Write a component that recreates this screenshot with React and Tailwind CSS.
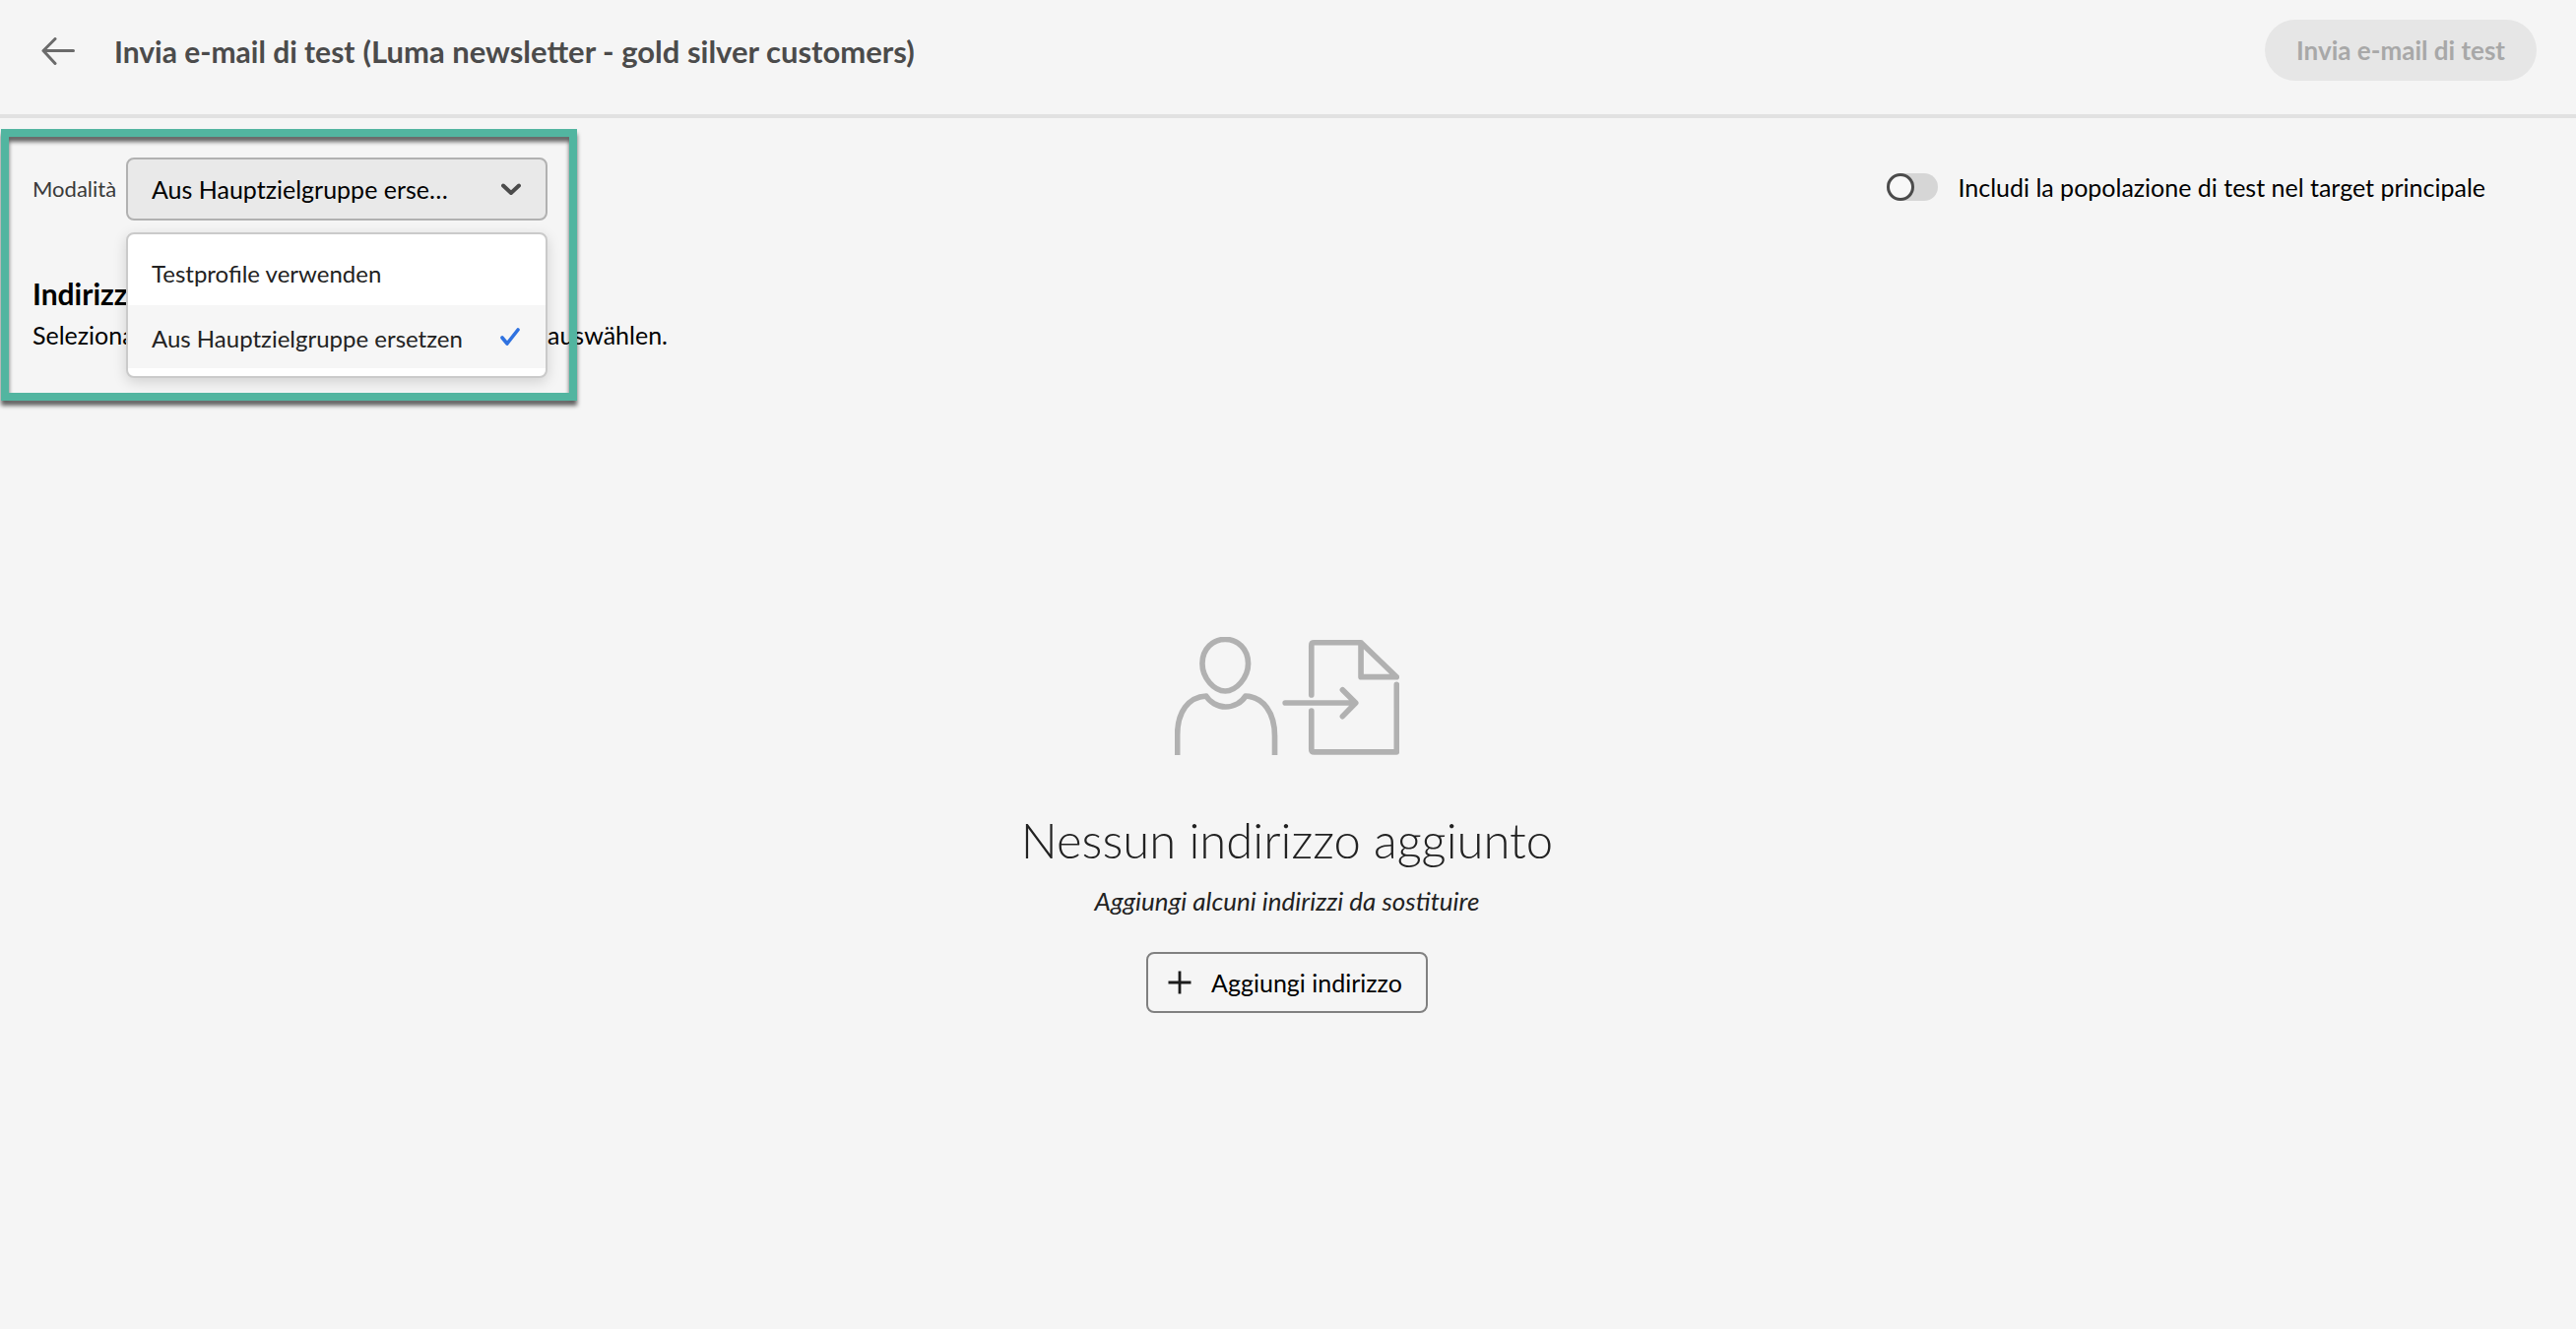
import { useState } from "react";

const MODES = ["Testprofile verwenden", "Aus Hauptzielgruppe ersetzen"];

function ArrowLeft() {
  return (
    <svg viewBox="0 0 34 28" className="h-7 w-[34px]" fill="none" stroke="#6b6b6b" strokeWidth="3" strokeLinecap="round" strokeLinejoin="round" aria-hidden="true">
      <path d="M32.500 13.500H2M14 1.500L2 13.500L14 26.500" />
    </svg>
  );
}

function Chevron() {
  return (
    <svg viewBox="0 0 20 13" className="pointer-events-none -ml-[47px] h-[13px] w-5 shrink-0" fill="none" stroke="#4b4b4b" strokeWidth="4" strokeLinecap="round" strokeLinejoin="round" aria-hidden="true">
      <path d="M2 2.500L10 10L18 2.500" />
    </svg>
  );
}

function Check() {
  return (
    <svg viewBox="0 0 20 18" className="mb-1 h-[18px] w-5 shrink-0" fill="none" stroke="#2f72e0" strokeWidth="3.600" strokeLinecap="round" strokeLinejoin="round" aria-hidden="true">
      <path d="M2 10L7 16L18 2" />
    </svg>
  );
}

function Plus() {
  return (
    <svg viewBox="0 0 24 24" className="h-6 w-6 shrink-0" stroke="#1c1c1c" strokeWidth="2.800" strokeLinecap="butt" aria-hidden="true">
      <path d="M0.500 12H23.500M12 0.500V23.500" />
    </svg>
  );
}

function ImportPeople() {
  return (
    <svg viewBox="99 81 685 360" className="h-[120px] w-[228px]" fill="none" stroke="#b1b1b1" strokeWidth="17" strokeLinecap="round" strokeLinejoin="round" aria-hidden="true">
      <path d="M253 88C290 88 323 116 323 162C323 206 286 246 253 246C219 246 183 206 183 162C183 116 216 88 253 88Z" />
      <path d="M107 445V380C107 310 140 264 195 261C205 279 229 294 254 294C280 294 304 280 315 261C370 264 404 313 404 383V445" strokeLinecap="butt" />
      <path d="M516 258V106Q516 98 524 98H667L776 203H667V98" />
      <path d="M776 226V432H524Q516 432 516 424V306" />
      <path d="M436 282H650M611 242L651 282L611 323" />
    </svg>
  );
}

export default function App() {
  const [mode, setMode] = useState(MODES[1]);
  const [include, setInclude] = useState(false);

  return (
    <div className="flex min-h-screen flex-col bg-[#f5f5f5] font-['Lato',sans-serif] text-[25px] leading-8 text-[#222222]">
      <header className="flex h-[120px] items-start justify-between border-b-4 border-[#e1e1e1] pt-5 pr-10 pl-[42px]">
        <div className="flex h-16 items-center">
          <button type="button" aria-label="Indietro" className="mr-10">
            <ArrowLeft />
          </button>
          <h1 className="flex items-baseline gap-2 text-[30px] font-bold text-[#4b4b4b]">
            <span>Invia e-mail di test</span>
            <span className="text-[31px]">(Luma newsletter - gold silver customers)</span>
          </h1>
        </div>
        <button type="button" disabled className="h-[62px] rounded-full bg-[#e6e6e6] px-8 text-[26px] font-bold text-[#a8a8a8]">
          Invia e-mail di test
        </button>
      </header>

      <main className="flex flex-col">
        <div className="flex items-start justify-between pr-[92px]">
          <section className="relative h-72 w-[586px] pt-10 pl-[33px] text-2xl leading-8">
            <div className="flex items-center">
              <label htmlFor="mode" className="w-[95px] shrink-0 text-[22px] text-[#3a3a3a]">
                Modalità
              </label>
              <div className="relative flex items-center">
                <select
                  id="mode"
                  value={mode}
                  onChange={(e) => setMode(e.target.value)}
                  className="h-16 w-[428px] appearance-none overflow-hidden rounded-lg border-2 border-[#b1b1b1] bg-[#e9e9e9] pr-24 pl-6 text-[25px] text-ellipsis whitespace-nowrap text-black"
                >
                  {MODES.map((m) => (
                    <option key={m}>{m}</option>
                  ))}
                </select>
                <Chevron />
                <ul role="listbox" aria-label="Modalità" className="absolute top-[76px] left-0 z-10 w-[428px] rounded-lg border-2 border-[#cacaca] bg-white pb-2 shadow-[0_4px_14px_rgba(0,0,0,0.15)]">
                  {MODES.map((m) => (
                    <li
                      key={m}
                      role="option"
                      aria-selected={m === mode}
                      onClick={() => setMode(m)}
                      className="flex h-[72px] items-center justify-between pt-2 pr-[26px] pl-6 text-[#222222] aria-selected:h-16 aria-selected:bg-[#f6f6f6] aria-selected:pt-1"
                    >
                      {m}
                      {m === mode && <Check />}
                    </li>
                  ))}
                </ul>
              </div>
            </div>
            <h2 className="mt-14 text-[30px] leading-9 font-bold text-black">Indirizzo</h2>
            <p className="mt-2 flex text-[25px] text-black">
              <span className="w-[523px] shrink-0">Seleziona</span>
              <span>auswählen.</span>
            </p>
            <div className="pointer-events-none absolute top-[11px] left-px z-20 h-[276px] w-[585px] border-8 border-[#52b5a0] drop-shadow-[0_5px_2px_rgba(0,0,0,0.6)]" />
          </section>

          <label className="mt-[54px] flex items-center gap-5 text-black">
            <input
              type="checkbox"
              role="switch"
              checked={include}
              onChange={(e) => setInclude(e.target.checked)}
              className="h-7 w-[52px] appearance-none rounded-full bg-[#d6d6d6] before:block before:size-7 before:rounded-full before:border-3 before:border-[#4b4b4b] before:bg-[#f8f8f8] checked:before:ml-6"
            />
            Includi la popolazione di test nel target principale
          </label>
        </div>

        <section className="mt-[239px] flex flex-col items-center pr-0.5">
          <ImportPeople />
          <h2 className="mt-14 text-[49px] leading-[60px] font-light">Nessun indirizzo aggiunto</h2>
          <p className="mt-4 text-[26px] italic">Aggiungi alcuni indirizzi da sostituire</p>
          <button type="button" className="mt-9 flex h-[62px] items-center gap-5 rounded-lg border-2 border-[#808080] pr-6 pl-5 text-black">
            <Plus />
            Aggiungi indirizzo
          </button>
        </section>
      </main>
    </div>
  );
}
